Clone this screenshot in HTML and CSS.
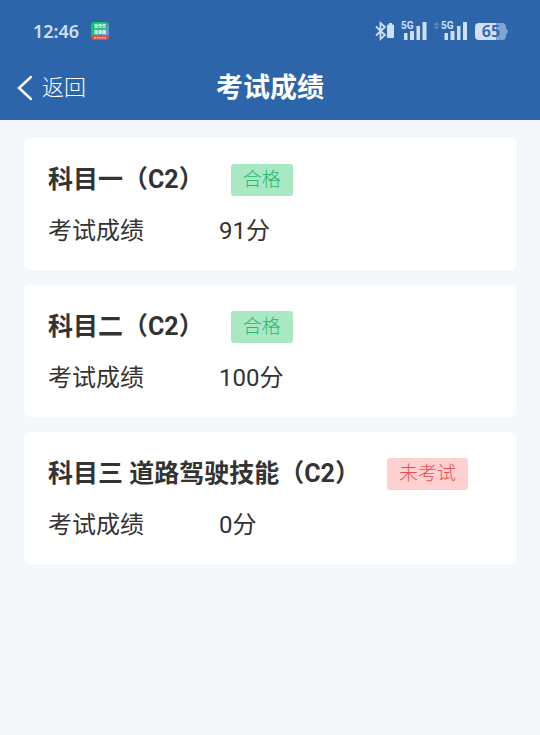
FILE: index.html
```html
<!DOCTYPE html>
<html lang="zh-CN">
<head>
    <meta charset="UTF-8">
    <meta name="viewport" content="width=device-width, initial-scale=1.0">
    <title>考试成绩</title>
    <link rel="stylesheet" href="styles.css">
</head>
<body>
    <header class="header">
        <div class="status-bar">
            <span class="time">12:46</span>
            <svg class="app-icon" width="18" height="18" viewBox="0 0 18 18">
                <defs>
                    <linearGradient id="appColor" x1="0" y1="0" x2="1" y2="1">
                        <stop offset="0.3" stop-color="#12c45c"/>
                        <stop offset="0.8" stop-color="#6d8fe0"/>
                    </linearGradient>
                    <clipPath id="appShape"><rect width="18" height="18" rx="4"/></clipPath>
                </defs>
                <g clip-path="url(#appShape)">
                    <rect width="18" height="18" fill="url(#appColor)"/>
                    <path d="M0 13.5h18V18H0z" fill="#e4473c"/>
                    <path d="M3 15.8h12" stroke="#f6b3a8" stroke-width="1.4" stroke-dasharray="2 0.6"/>
                </g>
                <text class="app-text" x="9" y="6" text-anchor="middle">爱奇艺</text>
                <text class="app-text" x="9" y="12" text-anchor="middle">极速版</text>
            </svg>
            <div class="status-icons">
                <svg width="136" height="22" viewBox="0 0 136 22" fill="#cfdff5">
                    <path d="M2 6.5l9 8.5-4.5 4V3l4.5 4-9 8.5" fill="none" stroke="#cfdff5" stroke-width="1.8"/>
                    <path d="M15 3h3v1.500h1q1 0 1 1V17q0 1-1 1h-5q-1 0-1-1V5.500q0-1 1-1h1z"/>
                    <text class="network" x="27" y="9">5G</text>
                    <rect x="30" y="13" width="3.5" height="7" rx="0.5"/>
                    <rect x="36" y="11" width="4" height="9" rx="0.5"/>
                    <rect x="42.5" y="6" width="3.5" height="14" rx="0.5"/>
                    <rect x="48.5" y="2" width="4" height="18" rx="0.5"/>
                    <path d="M60 5l2.500-3L65 5zM60 6.500l2.500 3 2.500-3z" opacity="0.35"/>
                    <text class="network" x="67" y="9">5G</text>
                    <rect x="70.500" y="13" width="3.5" height="7" rx="0.5"/>
                    <rect x="76.500" y="11" width="4" height="9" rx="0.5"/>
                    <rect x="83" y="6" width="3.5" height="14" rx="0.5"/>
                    <rect x="89" y="2" width="4" height="18" rx="0.5"/>
                    <path d="M105 3h17v17h-17q-4 0-4-4V7q0-4 4-4z"/>
                    <path d="M122 3h6q4 0 4 4v2q2 0 2 2.500t-2 2.500v2q0 4-4 4h-6z" fill="#7fa3d3"/>
                    <text class="battery" x="117" y="17" text-anchor="middle">65</text>
                </svg>
            </div>
        </div>
        <nav class="nav">
            <button class="back" type="button">
                <svg width="16" height="26" viewBox="0 0 16 26" fill="none" stroke="#fff" stroke-width="2.5" stroke-linecap="round">
                    <path d="M14 2L2 13l12 11"/>
                </svg>
                返回
            </button>
            <h1 class="title">考试成绩</h1>
        </nav>
    </header>

    <main class="list">
        <section class="card">
            <div class="card-head">
                <h2 class="subject">科目一（C2）</h2>
                <span class="tag pass">合格</span>
            </div>
            <dl class="score">
                <dt>考试成绩</dt>
                <dd>91分</dd>
            </dl>
        </section>

        <section class="card">
            <div class="card-head">
                <h2 class="subject">科目二（C2）</h2>
                <span class="tag pass">合格</span>
            </div>
            <dl class="score">
                <dt>考试成绩</dt>
                <dd>100分</dd>
            </dl>
        </section>

        <section class="card">
            <div class="card-head">
                <h2 class="subject">科目三 道路驾驶技能（C2）</h2>
                <span class="tag none">未考试</span>
            </div>
            <dl class="score">
                <dt>考试成绩</dt>
                <dd>0分</dd>
            </dl>
        </section>
    </main>
</body>
</html>
```

FILE: styles.css
```css
* {
    box-sizing: border-box;
}
body {
    margin: 0;
    background-color: #f4f8fa;
    color: #333;
    font-family: Roboto, "Noto Sans CJK SC", sans-serif;
}
h1, h2, dl, dd {
    margin: 0;
}
.header {
    background-color: #2c65aa;
    color: white;
}
.status-bar {
    display: flex;
    align-items: center;
    height: 56px;
    padding: 6px 30px 0 33px;
}
.time {
    color: #cfdff5;
    font-family: "Noto Sans", sans-serif;
    font-size: 18px;
    font-weight: 600;
}
.app-icon {
    margin-left: 12px;
}
.app-text {
    fill: white;
    font-family: "Noto Sans CJK SC", sans-serif;
    font-size: 4px;
    font-weight: bold;
}
.status-icons {
    display: flex;
    margin-left: auto;
}
.network {
    font-size: 10px;
    font-weight: bold;
}
.battery {
    fill: #2c65aa;
    font-family: "Noto Sans", sans-serif;
    font-size: 16px;
    font-weight: 600;
}
.nav {
    display: grid;
    grid-template-columns: 1fr auto 1fr;
    align-items: center;
    height: 64px;
    padding: 0 17px;
}
.back {
    display: flex;
    align-items: center;
    justify-self: start;
    gap: 9px;
    padding: 0;
    border: none;
    background: none;
    color: white;
    font-family: inherit;
    font-size: 22px;
    font-weight: 300;
    line-height: 32px;
    cursor: pointer;
}
.title {
    font-size: 27px;
    line-height: 40px;
}
.list {
    display: flex;
    flex-direction: column;
    gap: 15px;
    padding: 18px 24px;
}
.card {
    padding: 25px 24px 21px;
    border-radius: 6px;
    background-color: white;
}
.card-head {
    display: flex;
    align-items: center;
    gap: 27px;
}
.subject {
    font-size: 25px;
    line-height: 34px;
}
.tag {
    padding: 0 12px;
    border-radius: 3px;
    font-size: 19px;
    font-weight: 300;
    line-height: 32px;
}
.pass {
    background-color: #a8e8c2;
    color: #2bb673;
}
.none {
    background-color: #ffd0d0;
    color: #e84e4e;
}
.score {
    display: flex;
    margin-top: 16px;
    font-size: 24px;
    line-height: 36px;
}
.score dt {
    width: 171px;
}
```
